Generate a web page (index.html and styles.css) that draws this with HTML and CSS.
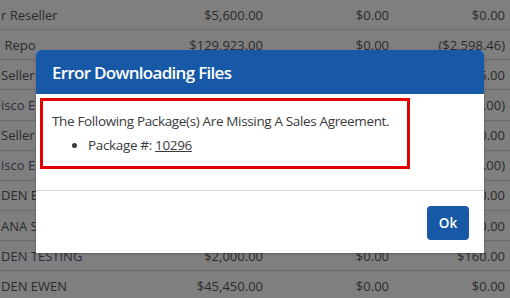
FILE: index.html
```html
<!DOCTYPE html>
<html lang="en">
<head>
  <meta charset="UTF-8">
  <title>Error Downloading Files</title>
  <link rel="stylesheet" href="styles.css">
</head>
<body>
  <div class="grid">
    <div class="row"><span class="name">r Reseller</span><span class="num">$5,600.00</span><span class="num">$0.00</span><span class="num">$0.00</span></div>
    <div class="row"><span class="name">&nbsp;Repo</span><span class="num">$129,923.00</span><span class="num">$0.00</span><span class="num">($2,598.46)</span></div>
    <div class="row"><span class="name">Seller</span><span class="num">$4,250.00</span><span class="num">$0.00</span><span class="num">$85.00</span></div>
    <div class="row visited"><span class="name">isco Eco</span><span class="num">$12,000.00</span><span class="num">$0.00</span><span class="num">($240.00)</span></div>
    <div class="row"><span class="name">Seller</span><span class="num">$3,000.00</span><span class="num">$0.00</span><span class="num">$60.00</span></div>
    <div class="row visited"><span class="name">isco Eco</span><span class="num">$9,500.00</span><span class="num">$0.00</span><span class="num">($190.00)</span></div>
    <div class="row"><span class="name">DEN EWEN</span><span class="num">$1,000.00</span><span class="num">$0.00</span><span class="num">$20.00</span></div>
    <div class="row"><span class="name">ANA SPRINGS</span><span class="num">$7,000.00</span><span class="num">$0.00</span><span class="num">$140.00</span></div>
    <div class="row visited"><span class="name">DEN TESTING</span><span class="num">$2,000.00</span><span class="num">$0.00</span><span class="num">$160.00</span></div>
    <div class="row"><span class="name">DEN EWEN</span><span class="num">$45,450.00</span><span class="num">$0.00</span><span class="num">$0.00</span></div>
  </div>

  <div class="modal">
    <div class="modal-header">Error Downloading Files</div>
    <div class="modal-body">
      <div class="highlight">
        <p>The Following Package(s) Are Missing A Sales Agreement.</p>
        <ul>
          <li>Package #: <a href="#">10296</a></li>
        </ul>
      </div>
    </div>
    <div class="modal-footer">
      <button class="btn">Ok</button>
    </div>
  </div>
</body>
</html>
```

FILE: styles.css
```css
* {
  box-sizing: border-box;
}

body {
  margin: 0;
  background: #7f7f7f;
  font-family: 'Open Sans', sans-serif;
  overflow: hidden;
}

.grid {
  font-size: 13px;
  color: #2b2b2b;
}

.row {
  display: flex;
  align-items: center;
  height: 30.15px;
  padding-right: 5px;
  border-bottom: 1px solid #6c6c6c;
  white-space: nowrap;
}

.row.visited .name {
  color: #35293f;
}

.name {
  width: 150px;
  padding-left: 1px;
  overflow: hidden;
}

.num {
  text-align: right;
  width: 113px;
}

.num + .num {
  width: 126px;
}

.num + .num + .num {
  width: 116px;
}

.modal {
  position: absolute;
  left: 36px;
  top: 50px;
  width: 448px;
  height: 203px;
  background: #fff;
  border-radius: 5px 5px 0 0;
  box-shadow: 0 1px 3px rgba(0,0,0,0.25);
  display: flex;
  flex-direction: column;
}

.modal-header {
  height: 44px;
  background: #1759a6;
  color: #fff;
  border-radius: 5px 5px 0 0;
  font-size: 17px;
  font-weight: 600;
  letter-spacing: -0.7px;
  padding-left: 16px;
  display: flex;
  align-items: center;
}

.modal-body {
  padding: 4px 4px 21px;
  border-bottom: 1px solid #d3d3da;
}

.highlight {
  width: 370px;
  height: 71px;
  border: 3px solid #e30000;
  padding: 10px 9px;
  font-size: 13.5px;
  line-height: 20px;
  color: #3a3a3a;
  letter-spacing: -0.35px;
}

.highlight p {
  margin: 0;
}

.highlight ul {
  margin: 4px 0 0;
  padding-left: 36px;
}

.highlight a {
  color: #3a3a3a;
}

.modal-footer {
  flex: 1;
  display: flex;
  justify-content: flex-end;
  padding: 15px 15px 0;
}

.btn {
  width: 42px;
  height: 34px;
  border: none;
  border-radius: 4px;
  background: #1759a6;
  color: #fff;
  font-family: 'Open Sans', sans-serif;
  font-size: 13.5px;
  font-weight: 600;
  padding: 0;
}
```
